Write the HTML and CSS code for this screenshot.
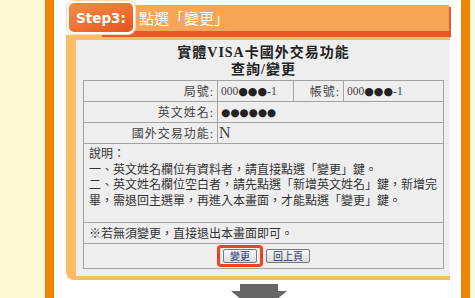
FILE: index.html
```html
<!DOCTYPE html>
<html lang="zh-Hant">
<head>
    <meta charset="UTF-8">
    <meta name="viewport" content="width=device-width, initial-scale=1.0">
    <title>Step3 點選變更</title>
    <link rel="stylesheet" href="styles.css">
</head>
<body>
    <div class="side side-left"></div>
    <div class="stripe"></div>

    <div class="main">
        <div class="card">
            <div class="step-head">
                <div class="step-badge">Step3:</div>
                <div class="step-bar">點選「變更」</div>
            </div>

            <div class="frame">
                <div class="panel">
                    <h2 class="panel-title">實體VISA卡國外交易功能<br>查詢/變更</h2>

                    <table class="info-table">
                        <colgroup>
                            <col class="col-label">
                            <col class="col-val">
                            <col class="col-label2">
                            <col>
                        </colgroup>
                        <tr>
                            <td class="lbl">局號:</td>
                            <td class="val">000<span class="dot">●●●</span>-1</td>
                            <td class="lbl">帳號:</td>
                            <td class="val">000<span class="dot">●●●</span>-1</td>
                        </tr>
                        <tr>
                            <td class="lbl">英文姓名:</td>
                            <td class="val dots" colspan="3">●●●●●●</td>
                        </tr>
                        <tr>
                            <td class="lbl">國外交易功能:</td>
                            <td class="val big" colspan="3">N</td>
                        </tr>
                        <tr>
                            <td class="desc" colspan="4">
                                說明：<br>
                                一、英文姓名欄位有資料者，請直接點選「變更」鍵。<br>
                                二、英文姓名欄位空白者，請先點選「新增英文姓名」鍵，新增完畢，需退回主選單，再進入本畫面，才能點選「變更」鍵。
                            </td>
                        </tr>
                        <tr>
                            <td class="note" colspan="4">※若無須變更，直接退出本畫面即可。</td>
                        </tr>
                        <tr>
                            <td class="actions" colspan="4">
                                <span class="highlight"><button class="btn">變更</button></span>
                                <button class="btn">回上頁</button>
                            </td>
                        </tr>
                    </table>
                </div>
            </div>
        </div>

        <div class="arrow">
            <svg width="56" height="16" viewBox="0 0 56 16">
                <rect x="9" y="0" width="38" height="8" fill="#666"></rect>
                <polygon points="0,7 56,7 28,30" fill="#666"></polygon>
            </svg>
        </div>
    </div>

    <div class="stripe"></div>
    <div class="side side-right"></div>
</body>
</html>
```

FILE: styles.css
```css
* {
    margin: 0;
    padding: 0;
    box-sizing: border-box;
}

body {
    display: flex;
    height: 298px;
    overflow: hidden;
    background-color: #fff;
    font-family: 'Liberation Serif', 'Noto Sans CJK TC', serif;
    color: #333;
}

.side {
    background-color: #fffad6;
}

.side-left {
    width: 45px;
}

.side-right {
    width: 5px;
}

.stripe {
    width: 9px;
    background-color: #f08300;
}

.main {
    width: 407px;
    background-color: #fff;
    padding: 0 10px 0 12px;
    display: flex;
    flex-direction: column;
}

.card {
    width: 384px;
}

/* en-tête de l'étape */
.step-head {
    display: flex;
    align-items: flex-start;
    height: 35px;
}

.step-badge {
    position: relative;
    z-index: 1;
    width: 68px;
    height: 33px;
    margin: 1px 0 0 1px;
    border: 2px solid #fff;
    border-radius: 7px;
    background: linear-gradient(160deg, #f68d44 0%, #ef6f30 55%, #e2531f 100%);
    box-shadow: 0 0 0 1px #fbd9b8;
    color: #fff;
    font-family: 'DejaVu Sans', sans-serif;
    font-weight: bold;
    font-size: 13.5px;
    display: flex;
    align-items: center;
    justify-content: center;
}

.step-bar {
    flex: 1;
    height: 30px;
    margin: 5px 1px 0 -35px;
    padding-left: 39px;
    background-color: #f5a555;
    border-bottom: 4px solid #e8582a;
    box-shadow: 2px 2px 0 #e8582a;
    color: #fff;
    font-family: 'Noto Sans CJK TC', sans-serif;
    font-size: 15px;
    line-height: 26px;
}

/* cadre orange */
.frame {
    background-color: #fbbd63;
    padding: 5px 0 4px 10px;
    border-radius: 0 0 0 8px;
}

.panel {
    background-color: #eeeeee;
    padding: 4px 6px 7px 7px;
}

.panel-title {
    text-align: center;
    font-size: 14px;
    font-weight: bold;
    line-height: 17px;
    color: #222;
    letter-spacing: 1px;
    margin-bottom: 2px;
}

.info-table {
    width: 361px;
    border-collapse: collapse;
    border: 1px solid #999;
    table-layout: fixed;
    font-size: 12px;
}

.col-label {
    width: 134px;
}

.col-val {
    width: 76px;
}

.col-label2 {
    width: 50px;
}

.info-table td {
    border: 1px solid #a3a3a3;
    height: 21px;
    padding: 0 3px;
    white-space: nowrap;
}

.info-table .lbl {
    text-align: right;
    letter-spacing: 1px;
    color: #444;
}

.info-table .val {
    color: #444;
    font-size: 11.5px;
}

.info-table .dot {
    font-family: 'DejaVu Sans', sans-serif;
    font-size: 11px;
    color: #222;
}

.info-table .dots {
    font-family: 'DejaVu Sans', sans-serif;
    font-size: 10.5px;
    color: #222;
}

.info-table .big {
    font-size: 16px;
    padding-left: 1px;
}

.info-table .desc {
    height: 79px;
    white-space: normal;
    vertical-align: top;
    padding: 3px 5px 4px 5px;
    line-height: 15.5px;
}

.info-table .note {
    padding-left: 5px;
}

.info-table .actions {
    height: 25px;
    text-align: center;
    font-size: 0;
}

.highlight {
    display: inline-block;
    border: 3px solid #e8461e;
    border-radius: 4px;
    padding: 1px 3px;
    margin: -2px 3px -2px 0;
    vertical-align: middle;
}

.btn {
    height: 14px;
    padding: 0 6px;
    border: 1px solid #777;
    border-radius: 2px;
    background: linear-gradient(#f8f8f8, #dcdcdc);
    color: #1c3277;
    font-family: 'Noto Sans CJK TC', sans-serif;
    font-size: 10px;
    line-height: 12px;
    vertical-align: middle;
}

.arrow {
    display: flex;
    justify-content: center;
    margin-top: 4px;
}

.arrow svg {
    display: block;
}
```
